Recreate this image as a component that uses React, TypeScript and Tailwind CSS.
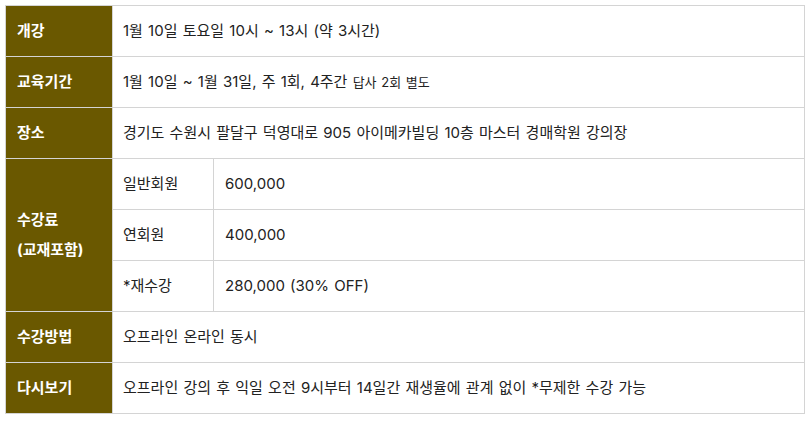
import React from "react";

const th =
  "border border-[#d4d4d4] bg-[#6a5800] text-white font-bold text-[15px] text-left align-middle pl-[11px] pr-2 w-[107px]";
const td =
  "border border-[#d4d4d4] text-[15px] text-[#222] align-middle pl-[10px] pr-2 [word-spacing:1px]";

export default function App() {
  return (
    <div
      className="bg-white w-[811px] h-[421px] pt-[5px] pl-[5px]"
      style={{ fontFamily: 'Inter, "Noto Sans CJK KR", sans-serif' }}
    >
      <table className="border-collapse w-[800px] table-fixed">
        <colgroup>
          <col className="w-[107px]" />
          <col className="w-[101px]" />
          <col />
        </colgroup>
        <tbody>
          <tr className="h-[51px]">
            <th className={th}>개강</th>
            <td className={td} colSpan={2}>1월 10일 토요일 10시 ~ 13시 (약 3시간)</td>
          </tr>
          <tr className="h-[51px]">
            <th className={th}>교육기간</th>
            <td className={td} colSpan={2}>
              1월 10일 ~ 1월 31일, 주 1회, 4주간 <span className="text-[13px]">답사 2회 별도</span>
            </td>
          </tr>
          <tr className="h-[51px]">
            <th className={th}>장소</th>
            <td className={td} colSpan={2}>
              경기도 수원시 팔달구 덕영대로 905 아이메카빌딩 10층 마스터 경매학원 강의장
            </td>
          </tr>
          <tr className="h-[51px]">
            <th className={th + " leading-[30px]"} rowSpan={3}>
              수강료
              <br />
              (교재포함)
            </th>
            <td className={td}>일반회원</td>
            <td className={td + " pl-[11px]"}>600,000</td>
          </tr>
          <tr className="h-[51px]">
            <td className={td}>연회원</td>
            <td className={td + " pl-[11px]"}>400,000</td>
          </tr>
          <tr className="h-[51px]">
            <td className={td}>*재수강</td>
            <td className={td + " pl-[11px]"}>280,000 (30% OFF)</td>
          </tr>
          <tr className="h-[51px]">
            <th className={th}>수강방법</th>
            <td className={td} colSpan={2}>오프라인 온라인 동시</td>
          </tr>
          <tr className="h-[51px]">
            <th className={th}>다시보기</th>
            <td className={td} colSpan={2}>
              오프라인 강의 후 익일 오전 9시부터 14일간 재생율에 관계 없이 *무제한 수강 가능
            </td>
          </tr>
        </tbody>
      </table>
    </div>
  );
}
